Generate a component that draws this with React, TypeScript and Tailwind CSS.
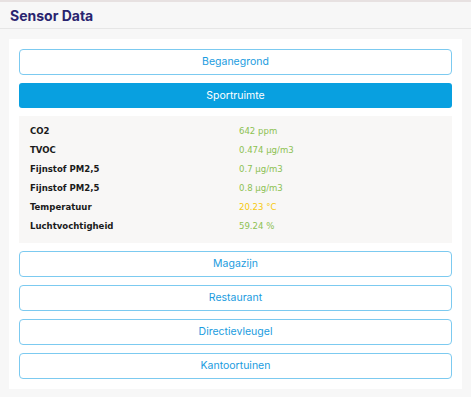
import React from 'react';

export default function App() {
  const before = ['Beganegrond'];
  const after = ['Magazijn', 'Restaurant', 'Directievleugel', 'Kantoortuinen'];
  const rows = [
    { label: 'CO2', value: '642 ppm', color: 'text-[#8cc152]' },
    { label: 'TVOC', value: '0.474 µg/m3', color: 'text-[#8cc152]' },
    { label: 'Fijnstof PM2,5', value: '0.7 µg/m3', color: 'text-[#8cc152]' },
    { label: 'Fijnstof PM2,5', value: '0.8 µg/m3', color: 'text-[#8cc152]' },
    { label: 'Temperatuur', value: '20.23 °C', color: 'text-[#f6c90e]' },
    { label: 'Luchtvochtigheid', value: '59.24 %', color: 'text-[#8cc152]' },
  ];

  const btn = (name: string) => (
    <button
      key={name}
      className="h-[26px] w-full rounded-[4px] border border-[#7ccaf0] bg-white text-[10.5px] text-[#1a9ce0]"
    >
      {name}
    </button>
  );

  return (
    <div className="h-[397px] w-[471px] bg-[#f7f7f7] font-['Inter',sans-serif]">
      <div className="h-[2px] bg-[#e7e1e1]" />
      <div className="flex h-[27px] items-center border-b border-[#e6e6e6] px-[10px]">
        <h1 className="text-[14px] font-bold text-[#29246f]">Sensor Data</h1>
      </div>

      <div className="mx-[9px] mt-[10px] flex flex-col gap-[8px] bg-white px-[10px] py-[10px]">
        {before.map(btn)}
        <button className="h-[25px] w-full rounded-[3px] bg-[#08a0e0] text-[10.5px] text-white">
          Sportruimte
        </button>

        <div className="flex flex-col bg-[#f8f7f6] px-[11px] pt-[6px] pb-[7px] font-['DejaVu_Sans_Condensed','DejaVu_Sans',sans-serif]">
          {rows.map((r, i) => (
            <div key={i} className="flex h-[19px] items-center">
              <span className="w-[209px] text-[9.5px] font-bold text-[#1a1a1a]">{r.label}</span>
              <span className={`text-[9.5px] ${r.color}`}>{r.value}</span>
            </div>
          ))}
        </div>

        {after.map(btn)}
      </div>
    </div>
  );
}
